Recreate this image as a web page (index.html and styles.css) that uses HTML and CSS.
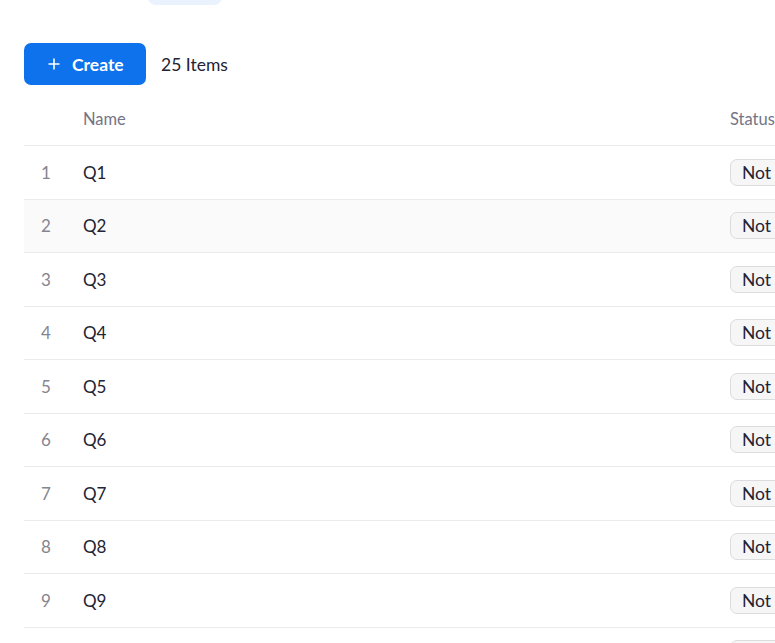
FILE: index.html
```html
<!DOCTYPE html>
<html>
<head>
<meta charset="utf-8">
<link rel="stylesheet" href="styles.css">
</head>
<body>
<div class="page">
  <div class="tabs"><span class="tab-active"></span></div>
  <div class="toolbar">
    <button class="btn-create">
      <svg class="plus" width="12" height="12" viewBox="0 0 12 12"><path d="M6 0.5V11.5M0.5 6H11.5" stroke="#fff" stroke-width="1.6" fill="none"/></svg>
      <span>Create</span>
    </button>
    <span class="count">25 Items</span>
  </div>
  <div class="table">
    <div class="row head">
      <div class="c-num"></div>
      <div class="c-name">Name</div>
      <div class="c-status">Status</div>
    </div>
    <div class="row"><div class="c-num">1</div><div class="c-name">Q1</div><div class="c-status"><span class="badge">Not started</span></div></div>
    <div class="row hover"><div class="c-num">2</div><div class="c-name">Q2</div><div class="c-status"><span class="badge">Not started</span></div></div>
    <div class="row"><div class="c-num">3</div><div class="c-name">Q3</div><div class="c-status"><span class="badge">Not started</span></div></div>
    <div class="row"><div class="c-num">4</div><div class="c-name">Q4</div><div class="c-status"><span class="badge">Not started</span></div></div>
    <div class="row"><div class="c-num">5</div><div class="c-name">Q5</div><div class="c-status"><span class="badge">Not started</span></div></div>
    <div class="row"><div class="c-num">6</div><div class="c-name">Q6</div><div class="c-status"><span class="badge">Not started</span></div></div>
    <div class="row"><div class="c-num">7</div><div class="c-name">Q7</div><div class="c-status"><span class="badge">Not started</span></div></div>
    <div class="row"><div class="c-num">8</div><div class="c-name">Q8</div><div class="c-status"><span class="badge">Not started</span></div></div>
    <div class="row"><div class="c-num">9</div><div class="c-name">Q9</div><div class="c-status"><span class="badge">Not started</span></div></div>
    <div class="row"><div class="c-num">10</div><div class="c-name">Q10</div><div class="c-status"><span class="badge">Not started</span></div></div>
  </div>
</div>
</body>
</html>
```
FILE: styles.css
```css
html, body {
  margin: 0;
  padding: 0;
  background: #fff;
  overflow: hidden;
}
body {
  font-family: Lato, "Open Sans", sans-serif;
  color: #232333;
}
.page {
  width: 775px;
  height: 643px;
  overflow: hidden;
  padding-left: 24px;
  box-sizing: border-box;
}
.tabs {
  height: 5px;
  position: relative;
}
.tab-active {
  position: absolute;
  left: 124px;
  top: -20px;
  width: 74px;
  height: 25px;
  border-radius: 8px;
  background: #e9f2fd;
}
.toolbar {
  display: flex;
  align-items: center;
  margin-top: 38px;
  height: 42px;
}
.btn-create {
  display: flex;
  align-items: center;
  gap: 12px;
  width: 122px;
  height: 42px;
  padding: 0 0 0 24px;
  border: none;
  border-radius: 7px;
  background: #0e72ed;
  color: #fff;
  font-family: Lato, sans-serif;
  font-weight: 700;
  font-size: 17.5px;
  box-sizing: border-box;
}
.plus { display: block; }
.count {
  margin-left: 15px;
  font-size: 17.5px;
  color: #232333;
}
.table {
  width: 920px;
  margin-top: 15px;
}
.row {
  display: grid;
  grid-template-columns: 44px 632px 220px;
  column-gap: 15px;
  align-items: center;
  height: 53.5px;
  border-bottom: 1px solid #ebebeb;
  box-sizing: border-box;
  font-size: 17px;
}
.row.head {
  height: 46px;
  padding-bottom: 7px;
}
.row.hover { background: #fafafa; }
.c-num {
  text-align: center;
  color: #85858f;
  font-size: 17px;
}
.c-name { color: #232333; font-size: 17px; }
.head .c-name, .head .c-status { color: #747487; font-size: 16.5px; }
.badge {
  display: inline-block;
  height: 27px;
  line-height: 25px;
  padding: 0 11px;
  border: 1px solid #dcdcdf;
  border-radius: 7px;
  background: #f6f6f7;
  color: #232333;
  font-size: 17.5px;
  box-sizing: border-box;
  white-space: nowrap;
}
```
